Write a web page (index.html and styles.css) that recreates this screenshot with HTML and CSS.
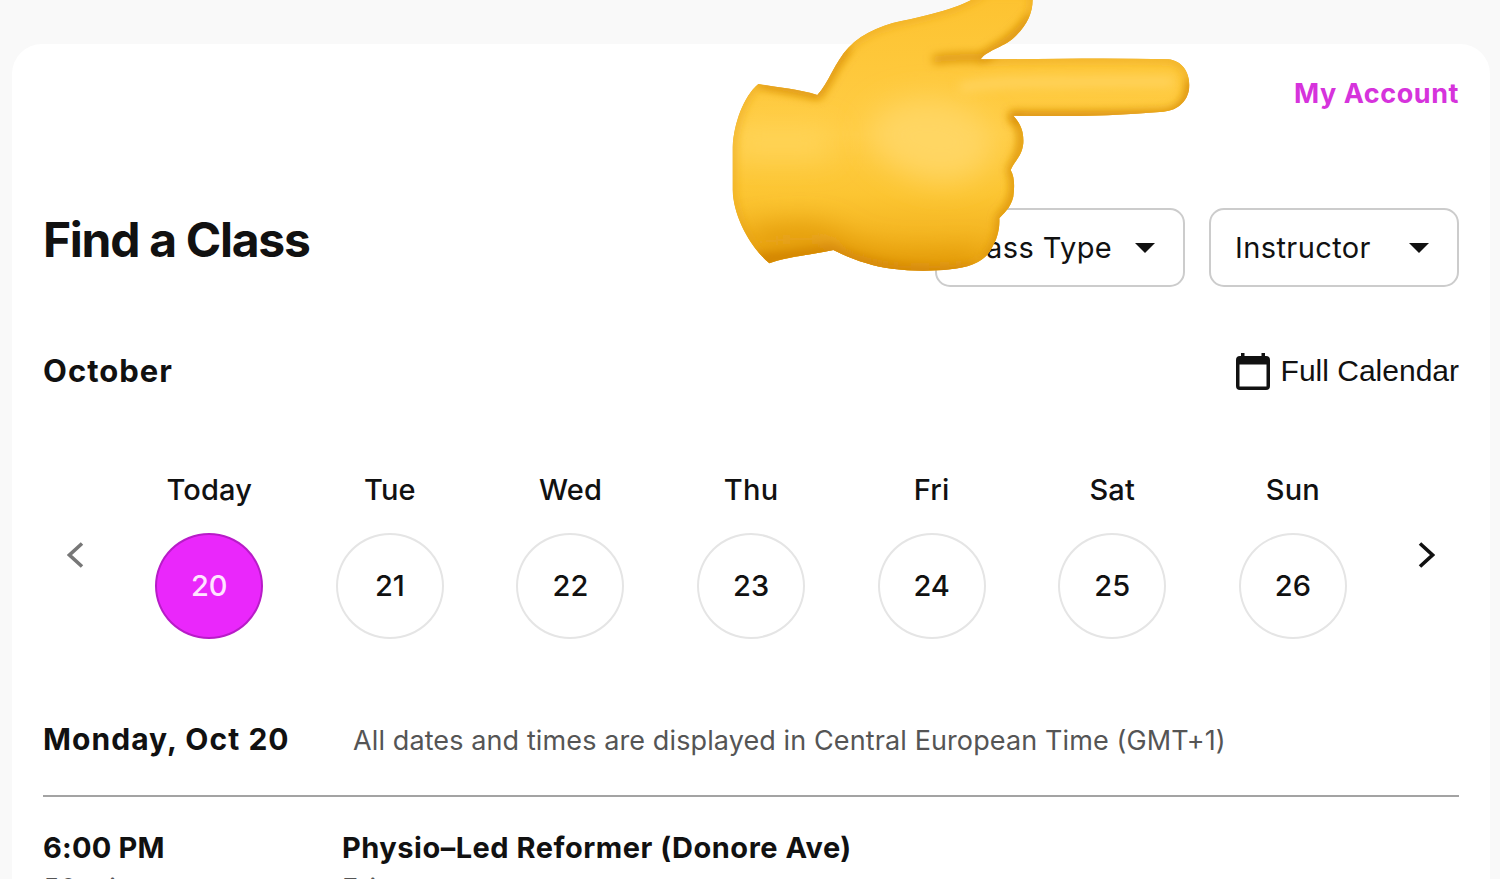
FILE: index.html
```html
<!DOCTYPE html>
<html lang="en">
<head>
  <meta charset="UTF-8">
  <meta name="viewport" content="width=device-width, initial-scale=1.0">
  <title>Find a Class</title>
  <link rel="stylesheet" href="styles.css">
</head>
<body>
  <main class="card">
    <div class="account-row">
      <a class="account" href="#">My Account</a>
    </div>

    <header class="header">
      <h1 class="title">Find a Class</h1>
      <div class="filters">
        <button class="filter filter-type"><span>Class Type</span><i class="caret"></i></button>
        <button class="filter filter-instructor"><span>Instructor</span><i class="caret"></i></button>
      </div>
    </header>

    <div class="month-row">
      <h2 class="month">October</h2>
      <a class="full-calendar" href="#">
        <svg width="34" height="37" viewBox="0 0 34 37" fill="#111">
          <path fill-rule="evenodd" d="M5 0h3.500v3h17V0H29v3h1a4 4 0 0 1 4 4v26a4 4 0 0 1-4 4H4a4 4 0 0 1-4-4V7a4 4 0 0 1 4-4h1zM3.500 11.500v22h27v-22z"/>
        </svg>
        <span>Full Calendar</span>
      </a>
    </div>

    <div class="week">
      <svg class="arrow arrow-prev" width="17" height="26" viewBox="0 0 17 26"><path d="M15 1.500L2.500 13 15 24.500"/></svg>
      <div class="day active"><span class="day-name">Today</span><span class="day-number">20</span></div>
      <div class="day"><span class="day-name">Tue</span><span class="day-number">21</span></div>
      <div class="day"><span class="day-name">Wed</span><span class="day-number">22</span></div>
      <div class="day"><span class="day-name">Thu</span><span class="day-number">23</span></div>
      <div class="day"><span class="day-name">Fri</span><span class="day-number">24</span></div>
      <div class="day"><span class="day-name">Sat</span><span class="day-number">25</span></div>
      <div class="day"><span class="day-name">Sun</span><span class="day-number">26</span></div>
      <svg class="arrow arrow-next" width="17" height="26" viewBox="0 0 17 26"><path d="M2 1.500L14.500 13 2 24.500"/></svg>
    </div>

    <div class="date-row">
      <h3 class="date">Monday, Oct 20</h3>
      <p class="timezone">All dates and times are displayed in Central European Time (GMT+1)</p>
    </div>

    <div class="session">
      <div class="session-time">
        <strong class="time">6:00 PM</strong>
        <span class="detail">50 min</span>
      </div>
      <div class="session-info">
        <strong class="name">Physio–Led Reformer (Donore Ave)</strong>
        <span class="detail">Eri</span>
      </div>
    </div>
  </main>

  <!-- pointing hand over the filters -->
  <svg class="hand" width="480" height="300" viewBox="0 0 1440 900">
    <defs>
      <linearGradient id="skin" x1="0" y1="0" x2="0" y2="810" gradientUnits="userSpaceOnUse">
        <stop offset="0" stop-color="#fdc331"/>
        <stop offset=".5" stop-color="#ffcd45"/>
        <stop offset=".72" stop-color="#fcc532"/>
        <stop offset="1" stop-color="#eda813"/>
      </linearGradient>
      <filter id="soft" filterUnits="userSpaceOnUse" x="-100" y="-100" width="1640" height="1100"><feGaussianBlur stdDeviation="15"/></filter>
      <filter id="softer" filterUnits="userSpaceOnUse" x="-200" y="-200" width="1840" height="1300"><feGaussianBlur stdDeviation="45"/></filter>
      <filter id="edge" filterUnits="userSpaceOnUse" x="-50" y="-50" width="1540" height="1000"><feGaussianBlur stdDeviation="2"/></filter>
      <path id="outline" d="M115 252C170 262 235 266 292 285C325 250 345 185 385 143C430 95 500 70 570 58C650 38 740 20 800-30L935-30C945 20 930 65 890 105C860 140 800 150 782 178C960 178 1150 172 1345 178C1385 182 1408 215 1408 255C1408 300 1375 332 1330 335C1180 348 1030 350 880 347C900 370 912 390 910 430C906 470 885 480 872 510C884 530 884 560 880 590C872 625 850 640 838 655C840 690 830 720 815 745C795 785 750 802 690 808C600 818 500 810 440 790C400 778 370 765 340 750C270 765 200 770 148 790C90 740 40 650 38 570L38 440C42 370 70 290 115 252Z"/>
      <clipPath id="hand-clip"><use href="#outline"/></clipPath>
    </defs>
    <use href="#outline" fill="#eeb02c" filter="url(#edge)"/>
    <g clip-path="url(#hand-clip)">
      <use href="#outline" fill="url(#skin)"/>
      <path d="M480 340C600 260 770 300 820 410C830 520 700 570 590 530C480 490 400 410 480 340Z" fill="#ffd664" filter="url(#softer)"/>
      <path d="M40 430H330" stroke="#ffd55c" stroke-width="80" filter="url(#softer)"/>
      <path d="M720 265C800 245 900 245 1360 245" fill="none" stroke="#ffd258" stroke-width="36" filter="url(#soft)"/>
      <use href="#outline" fill="none" stroke="#e7a31b" stroke-width="14" filter="url(#soft)"/>
      <path d="M640 180C690 168 740 172 790 172C830 146 880 120 935 50" fill="none" stroke="#d9920c" stroke-width="24" filter="url(#soft)"/>
      <path d="M120 250L292 284C320 250 340 190 385 143" fill="none" stroke="#db920a" stroke-width="22" filter="url(#soft)"/>
      <path d="M870 350H1330C1385 345 1420 300 1412 240" fill="none" stroke="#d98f08" stroke-width="28" filter="url(#soft)"/>
      <path d="M110 780L330 755C430 800 560 830 760 815" fill="none" stroke="#cf8000" stroke-width="42" filter="url(#soft)"/>
      <path d="M90 730C220 720 300 690 360 760C480 810 600 810 780 790" fill="none" stroke="#dd9307" stroke-width="64" filter="url(#softer)"/>
      <path d="M878 350C908 380 918 430 876 510C896 560 882 610 842 655C844 700 830 745 795 785" fill="none" stroke="#d98f08" stroke-width="18" filter="url(#soft)"/>
    </g>
  </svg>
</body>
</html>
```
FILE: styles.css
```css
* { box-sizing: border-box; }
body {
  margin: 0; padding: 44px 10px 0 12px;
  height: 879px; overflow: hidden;
  background: #f9f9f9; color: #111;
  font-family: Inter, "Liberation Sans", sans-serif;
}
h1, h2, h3, p { margin: 0; }
a { color: inherit; text-decoration: none; }
.card {
  height: 835px; padding: 0 31px; overflow: hidden;
  background: #fff; border-radius: 30px 30px 0 0;
}
.account-row { display: flex; justify-content: flex-end; padding-top: 32px; }
.account { color: #d633dc; font-size: 27px; font-weight: 700; line-height: 36px; letter-spacing: .55px; white-space: nowrap; }

.header { display: flex; justify-content: space-between; padding-top: 96px; }
.title { font-size: 48px; font-weight: 700; line-height: 64px; letter-spacing: -1.3px; white-space: nowrap; }
.filters { display: flex; gap: 24px; }
.filter {
  display: flex; align-items: center; justify-content: space-between;
  width: 250px; height: 79px; padding: 0 28px 0 24px;
  background: #fff; border: 2px solid #ccc; border-radius: 15px;
  color: #111; font-family: inherit; font-size: 29px; letter-spacing: .4px; white-space: nowrap;
}
.filter-type { padding-left: 20px; }
.caret { border: 10px solid transparent; border-top-color: #111; border-bottom: 0; }

.month-row { display: flex; align-items: center; justify-content: space-between; height: 40px; margin-top: 64px; }
.month { margin-top: -2px; font-size: 31px; font-weight: 700; letter-spacing: 1px; }
.full-calendar {
  display: flex; align-items: center; gap: 11px;
  font-family: "Liberation Sans", Arial, sans-serif; font-size: 30px; white-space: nowrap;
}

.week { display: flex; height: 170px; margin-top: 79px; padding: 0 24px; }
.arrow { flex: none; margin-top: 72px; fill: none; stroke: #111; stroke-width: 3.6; }
.arrow-prev { margin-right: 35px; stroke: #777; }
.arrow-next { margin-left: auto; }
.day { display: flex; flex-direction: column; align-items: center; flex: none; width: 180.6px; }
.day-name { font-size: 29px; font-weight: 500; line-height: 40px; letter-spacing: .2px; white-space: nowrap; }
.day-number {
  display: flex; align-items: center; justify-content: center;
  width: 108px; height: 106px; margin-top: 23px; padding-bottom: 2px;
  border: 2px solid #e5e5e5; border-radius: 50%;
  font-size: 29px; font-weight: 500;
}
.active .day-number { background: #ea27fb; border-color: #b81cc8; color: #ffe5ff; }

.date-row { display: flex; align-items: center; height: 113px; margin-top: 44px; border-bottom: 2px solid #a3a3a3; }
.date { width: 310px; margin-top: -2px; font-size: 30px; font-weight: 700; letter-spacing: 1.05px; white-space: nowrap; }
.timezone { margin-top: 2px; color: #555; font-size: 27px; letter-spacing: .11px; white-space: nowrap; }

.session { display: flex; padding-top: 31px; }
.session-time { width: 299px; }
.time, .name { display: block; font-size: 29px; font-weight: 700; line-height: 40px; white-space: nowrap; }
.time { letter-spacing: .2px; }
.name { letter-spacing: .5px; }
.detail { display: block; padding-top: 4px; color: #555; font-size: 27px; line-height: 34px; letter-spacing: .4px; }

.hand { position: absolute; left: 720px; top: 0; }
```
